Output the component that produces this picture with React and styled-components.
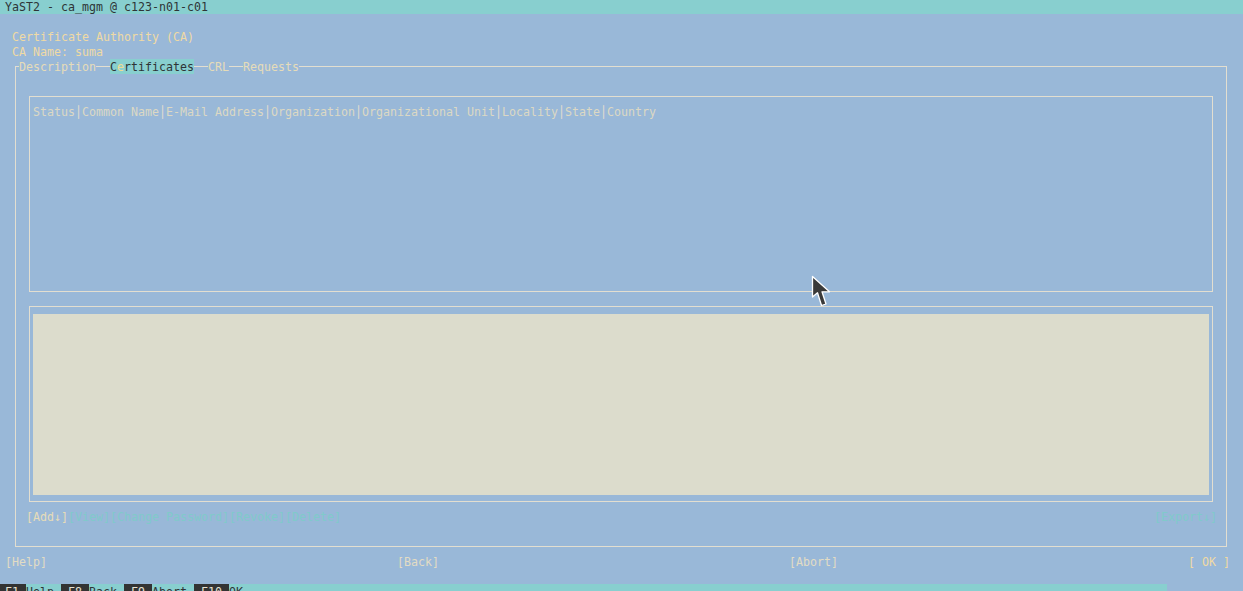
import styled, { createGlobalStyle } from "styled-components";

const GlobalStyle = createGlobalStyle`
  html, body {
    margin: 0;
    padding: 0;
    background: #99b8d8;
    overflow: hidden;
  }
  body {
    font-family: "DejaVu Sans Mono", "Liberation Mono", monospace;
    font-size: 11.63px;
  }
`

const Screen = styled.div`
  position: relative;
  width: 1243px;
  height: 591px;
  overflow: hidden;
  background: #99b8d8;
  color: #e6dcb8;
  line-height: 15px;
  white-space: pre;
`

const TitleBar = styled.div`
  height: 14px;
  line-height: 14px;
  padding-left: 5px;
  background: #88cfcf;
  color: #2e3436;
`

const Main = styled.div`
  padding-top: 15px;
`

// one terminal row: 15px high, glyphs sitting one pixel lower
const Row = styled.div`
  box-sizing: border-box;
  height: 15px;
  padding-top: 1px;
`

const Heading = styled(Row)`
  padding-left: 12px;
  color: #f0daa4;
`

const TabFrame = styled.div`
  margin-left: 15px;
  width: 1212px;
  display: flex;
  flex-direction: column;
`

const TabRow = styled.div`
  display: flex;
  height: 15px;
  align-items: flex-start;
`

const Line = styled.div`
  box-sizing: border-box;
  height: 8px;
  margin-top: 7px;
  border-top: 1px solid #e2ded0;
`

const CornerLeft = styled(Line)`
  width: 4px;
  border-left: 1px solid #e2ded0;
`

const Dash = styled(Line)`
  width: 14px;
`

const Filler = styled(Line)`
  flex: 1;
  border-right: 1px solid #e2ded0;
`

const TabLabel = styled.span`
  box-sizing: border-box;
  height: 15px;
  padding-top: 1px;
  color: ${(p) => (p.$active ? "#2e3436" : "#e6dcb8")};
  background: ${(p) => (p.$active ? "#88cfcf" : "transparent")};
`

const Hot = styled.span`
  color: #f0dc90;
`

const FrameBody = styled.div`
  box-sizing: border-box;
  height: 473px;
  border: 1px solid #e2ded0;
  border-top: none;
  display: flex;
  flex-direction: column;
`

const Box = styled.div`
  box-sizing: border-box;
  height: 196px;
  margin: 0 13px;
  border: 1px solid #e2ded0;
`

const TableBox = styled(Box)`
  margin-top: 22px;
  padding: 7px 3px 0;
`

const HeaderRow = styled(Row)`
  display: flex;
  color: #dcd8c4;
`

const Sep = styled.span`
  color: #e2ded0;
`

const DetailBox = styled(Box)`
  margin-top: 14px;
  padding: 7px 3px 6px;
  display: flex;
`

const Panel = styled.div`
  flex: 1;
  background: #dcdccc;
`

const ButtonRow = styled(Row)`
  display: flex;
  justify-content: space-between;
  margin-top: 7px;
  padding-left: 10px;
  padding-right: 9px;
`

const Btn = styled.span`
  color: ${(p) => (p.$disabled ? "#80caca" : "#e6dcb8")};
`

const BottomButtons = styled(Row)`
  display: grid;
  grid-template-columns: 392px 392px 392px 1fr;
  width: 1230px;
  margin-top: 7px;
  padding-left: 5px;
  & > :last-child {
    justify-self: end;
  }
`

const DialogBtn = styled.span`
  color: ${(p) => (p.$default ? "#f0daa4" : "#e2dcc4")};
`

const KeyBar = styled.div`
  display: flex;
  width: 1167px;
  height: 15px;
  margin-top: 15px;
  background: #88cfcf;
  color: #2e3436;
  & > :first-child {
    margin-left: -2px;
  }
`

const KeyItem = styled.span`
  box-sizing: border-box;
  height: 15px;
  padding-top: 1px;
`

const Key = styled.span`
  background: #333333;
  color: #e6e2d4;
  padding: 1px 0 2px;
`

const Cursor = styled.svg`
  position: absolute;
  left: 811px;
  top: 275px;
`

const columns = [
  "Status",
  "Common Name",
  "E-Mail Address",
  "Organization",
  "Organizational Unit",
  "Locality",
  "State",
  "Country",
]

const keys = [
  [" F1 ", "Help "],
  [" F8 ", "Back "],
  [" F9 ", "Abort "],
  [" F10 ", "OK"],
]

export default function App() {
  return (
    <>
      <GlobalStyle />
      <Screen>
        <TitleBar>YaST2 - ca_mgm @ c123-n01-c01</TitleBar>
        <Main>
          <Heading>Certificate Authority (CA)</Heading>
          <Heading>CA Name: suma</Heading>
          <TabFrame>
            <TabRow>
              <CornerLeft />
              <TabLabel>Description</TabLabel>
              <Dash />
              <TabLabel $active>
                C<Hot>e</Hot>rtificates
              </TabLabel>
              <Dash />
              <TabLabel>CRL</TabLabel>
              <Dash />
              <TabLabel>Requests</TabLabel>
              <Filler />
            </TabRow>
            <FrameBody>
              <TableBox>
                <HeaderRow>
                  {columns.map((c, i) => (
                    <span key={c}>
                      {i > 0 && <Sep>│</Sep>}
                      {c}
                    </span>
                  ))}
                </HeaderRow>
              </TableBox>
              <DetailBox>
                <Panel />
              </DetailBox>
              <ButtonRow>
                <span>
                  <Btn>[Add↓]</Btn>
                  <Btn $disabled>[View]</Btn>
                  <Btn $disabled>[Change Password]</Btn>
                  <Btn $disabled>[Revoke]</Btn>
                  <Btn $disabled>[Delete]</Btn>
                </span>
                <Btn $disabled>[Export↓]</Btn>
              </ButtonRow>
            </FrameBody>
          </TabFrame>
          <BottomButtons>
            <DialogBtn>[Help]</DialogBtn>
            <DialogBtn>[Back]</DialogBtn>
            <DialogBtn>[Abort]</DialogBtn>
            <DialogBtn $default>[ OK ]</DialogBtn>
          </BottomButtons>
          <KeyBar>
            {keys.map(([k, label]) => (
              <KeyItem key={k}>
                <Key>{k}</Key>
                {label}
              </KeyItem>
            ))}
          </KeyBar>
        </Main>
        <Cursor width="22" height="34" viewBox="0 0 22 34">
          <path
            d="M1.5 1.5 L1.5 22 L6.5 17.8 L10.5 30.5 L15 29 L11 16.8 L18.5 16.8 Z"
            fill="#3a3a3a"
            stroke="#ffffff"
            strokeWidth="1.3"
            strokeLinejoin="round"
          />
        </Cursor>
      </Screen>
    </>
  )
}
